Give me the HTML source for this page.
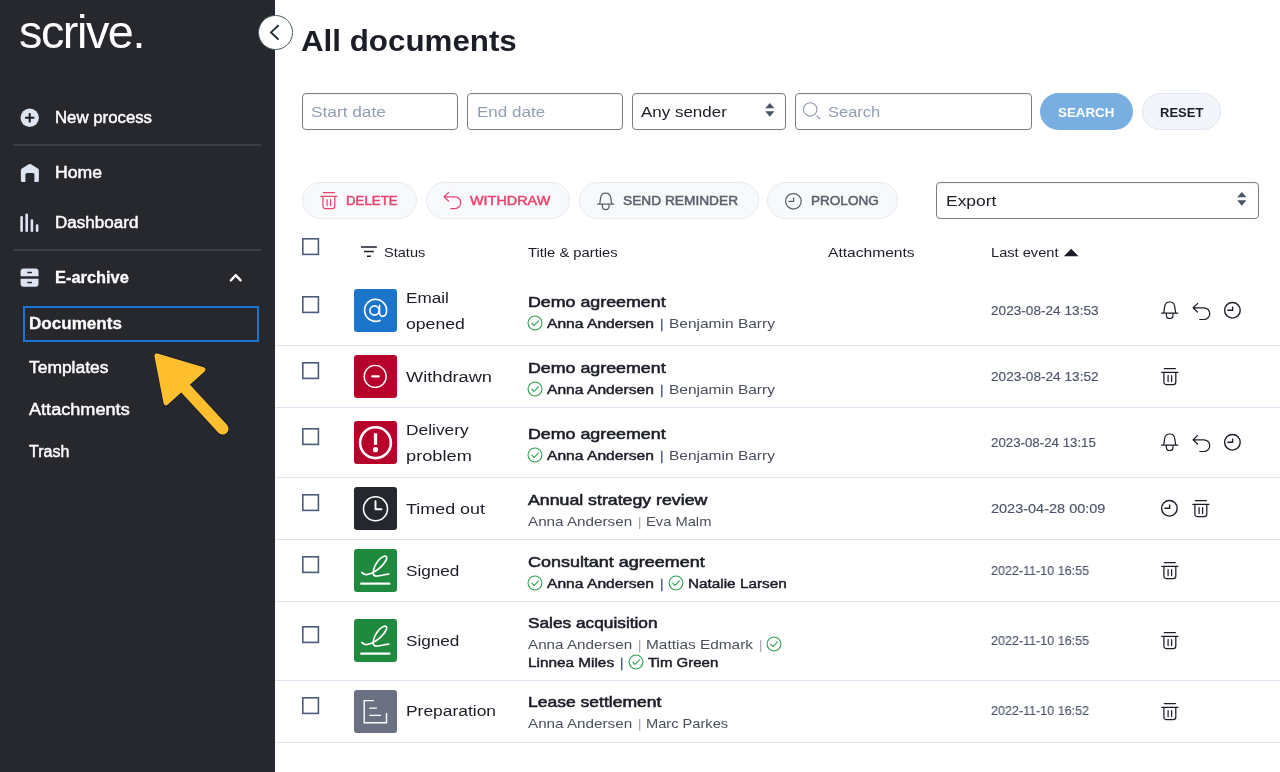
<!DOCTYPE html>
<html lang="en">
<head>
<meta charset="utf-8">
<title>All documents - Scrive</title>
<style>
html,body{margin:0;padding:0;}
body{width:1280px;height:772px;overflow:hidden;background:#fff;font-family:"Liberation Sans",sans-serif;}
#app{position:relative;width:1280px;height:772px;overflow:hidden;background:#fff;}
.t{position:absolute;white-space:nowrap;transform-origin:0 50%;display:block;will-change:transform;}
.abs{position:absolute;display:block;}
.grp{display:block;position:static;margin:0;padding:0;}
#side{position:absolute;left:0;top:0;width:275px;height:772px;background:#27282e;}
.hr{position:absolute;left:13px;width:248px;height:2px;background:#3b3d48;}
.inp{position:absolute;box-sizing:border-box;border:1px solid #787e87;border-radius:4px;background:#fff;box-shadow:inset 0 1px 2px rgba(0,0,0,.06);}
.pill{position:absolute;box-sizing:border-box;border:1px solid #e6ebf2;border-radius:19px;background:#f7f9fb;}
.rb{position:absolute;left:275px;width:1005px;height:1px;background:#dde5f0;}
.ico{position:absolute;left:354px;width:43px;height:43px;border-radius:3px;}
svg{position:absolute;overflow:visible;}

</style>
</head>
<body>
<div id="app">
<aside id="side"></aside>
<nav class="grp">
<span class="t" style="left:18.80px;top:1.66px;font-size:46px;line-height:60px;color:#ffffff;transform:scaleX(1.0152);letter-spacing:-1.4px;">scrive.</span>
<svg style="left:20px;top:108px" width="20" height="20" viewBox="0 0 20 20"><circle cx="9.700" cy="9.800" r="9.2" fill="#dfe5f0"/><path d="M9.700 6V13.600M5.900 9.800H13.500" stroke="#1d1e22" stroke-width="2.1" stroke-linecap="round" fill="none"/></svg>
<span class="t" style="left:55.30px;top:107.06px;font-size:16px;line-height:21px;color:#ffffff;transform:scaleX(1.0489);-webkit-text-stroke:0.45px #ffffff;">New process</span>
<div class="hr" style="top:144px"></div>
<svg style="left:20px;top:163px" width="20" height="20" viewBox="0 0 20 20"><path d="M0.9 7.2Q0.9 6 1.9 5.4L8.8 1.3Q9.9 0.7 11 1.3L17.9 5.4Q18.9 6 18.9 7.2V17.4Q18.9 18.9 17.4 18.9H14.4V11.4Q14.4 9.9 12.9 9.9H6.9Q5.4 9.9 5.4 11.4V18.9H2.4Q0.9 18.9 0.9 17.4Z" fill="#dde3f0"/></svg>
<span class="t" style="left:55.30px;top:161.76px;font-size:16px;line-height:21px;color:#ffffff;transform:scaleX(1.1012);-webkit-text-stroke:0.45px #ffffff;">Home</span>
<svg style="left:20px;top:212px" width="20" height="20" viewBox="0 0 20 20"><g fill="#dde3f0"><rect x="0.3" y="3.9" width="2.6" height="16" rx="1.2"/><rect x="5.4" y="1.4" width="2.6" height="18.5" rx="1.2"/><rect x="10.6" y="7.3" width="2.6" height="12.6" rx="1.2"/><rect x="15.8" y="12.3" width="2.6" height="7.6" rx="1.2"/></g></svg>
<span class="t" style="left:55.30px;top:211.86px;font-size:16px;line-height:21px;color:#ffffff;transform:scaleX(1.0668);-webkit-text-stroke:0.45px #ffffff;">Dashboard</span>
<div class="hr" style="top:249px"></div>
<svg style="left:20px;top:268px" width="20" height="20" viewBox="0 0 20 20"><g fill="#dde3f0"><path d="M0.600 8.200V3.600Q0.600 0.600 3.600 0.600H15.500Q18.500 0.600 18.500 3.600V8.200Z"/><path d="M0.600 10.700V15.800Q0.600 18.800 3.600 18.800H15.500Q18.500 18.800 18.500 15.800V10.700Z"/></g><g fill="#1d1e22"><rect x="7.300" y="3.800" width="4.600" height="1.500" rx="0.300"/><rect x="7.300" y="13.800" width="4.600" height="1.500" rx="0.300"/></g></svg>
<span class="t" style="left:55.40px;top:267.26px;font-size:16px;line-height:21px;color:#ffffff;font-weight:700;transform:scaleX(1.0244);-webkit-text-stroke:0.3px #ffffff;">E-archive</span>
<svg style="left:228px;top:272px" width="16" height="12" viewBox="0 0 16 12"><path d="M2.8 8.4L7.7 3.1L12.600 8.4" stroke="#fff" stroke-width="2.3" fill="none" stroke-linecap="round" stroke-linejoin="round"/></svg>
<div class="abs" style="left:23px;top:305.800px;width:236.300px;height:36.200px;box-sizing:border-box;border:2.200px solid #1a76d2"></div>
<span class="t" style="left:29.30px;top:313.06px;font-size:16px;line-height:21px;color:#ffffff;font-weight:700;transform:scaleX(1.0663);-webkit-text-stroke:0.3px #ffffff;">Documents</span>
<span class="t" style="left:29.00px;top:356.66px;font-size:16px;line-height:21px;color:#ffffff;transform:scaleX(1.0888);-webkit-text-stroke:0.45px #ffffff;">Templates</span>
<span class="t" style="left:28.60px;top:398.66px;font-size:16px;line-height:21px;color:#ffffff;transform:scaleX(1.1324);-webkit-text-stroke:0.45px #ffffff;">Attachments</span>
<span class="t" style="left:29.00px;top:441.46px;font-size:16px;line-height:21px;color:#ffffff;-webkit-text-stroke:0.45px #ffffff;">Trash</span>
<svg style="left:0;top:0" width="275" height="772" viewBox="0 0 275 772"><g stroke-linejoin="round" stroke-linecap="round"><path d="M186 389L222.7 428.8" stroke="#151a2b" stroke-width="13.2" fill="none"/><path d="M156.8 355.8L203 369.6L166 403Z" fill="#151a2b" stroke="#151a2b" stroke-width="6.4"/><path d="M186 389L222.7 428.8" stroke="#fdbf2d" stroke-width="11.6" fill="none"/><path d="M156.8 355.8L203 369.6L166 403Z" fill="#fdbf2d" stroke="#fdbf2d" stroke-width="4.8"/></g></svg>
</nav>
<div class="abs" style="left:258.2px;top:14.9px;width:34.8px;height:34.8px;box-sizing:border-box;border:1px solid #4a5a5c;border-radius:50%;background:#fff"></div>
<svg style="left:258px;top:15px" width="35" height="35" viewBox="0 0 35 35"><path d="M20.600 10.200L13 17.400L20.600 24.600" stroke="#1f2d33" stroke-width="1.900" fill="none" stroke-linecap="butt" stroke-linejoin="miter"/></svg>
<main class="grp">
<header class="grp">
<span class="t" style="left:300.60px;top:20.90px;font-size:30px;line-height:39px;color:#1b1d27;font-weight:700;transform:scaleX(1.0440);">All documents</span>
</header>
<section class="grp">
<div class="inp" style="left:301.5px;top:93px;width:156.5px;height:37px"></div>
<span class="t" style="left:311.20px;top:101.80px;font-size:15px;line-height:20px;color:#939eb2;transform:scaleX(1.1500);">Start date</span>
<div class="inp" style="left:466.5px;top:93px;width:156.5px;height:37px"></div>
<span class="t" style="left:476.60px;top:101.80px;font-size:15px;line-height:20px;color:#939eb2;transform:scaleX(1.1357);">End date</span>
<div class="inp" style="left:631.5px;top:93px;width:154.5px;height:37px"></div>
<span class="t" style="left:641.20px;top:101.70px;font-size:15px;line-height:20px;color:#1b1d27;transform:scaleX(1.1307);">Any sender</span>
<svg style="left:764px;top:102px" width="12" height="16" viewBox="0 0 12 16"><path d="M1.2 6.3L5.8 1L10.4 6.3ZM1.2 9.3L5.8 14.7L10.4 9.3Z" fill="#4a5568"/></svg>
<div class="inp" style="left:795px;top:93px;width:236.5px;height:37px"></div>
<svg style="left:801px;top:100px" width="22" height="22" viewBox="0 0 22 22"><circle cx="9.200" cy="9.400" r="6.700" stroke="#8c97ab" stroke-width="1.1" fill="none"/><path d="M16 16.100L18.800 18.700" stroke="#8c97ab" stroke-width="1.2" stroke-linecap="round"/></svg>
<span class="t" style="left:828.00px;top:101.80px;font-size:15px;line-height:20px;color:#939eb2;transform:scaleX(1.0983);">Search</span>
<div class="abs" style="left:1040px;top:93.3px;width:93px;height:37px;border-radius:19px;background:#78aee0"></div>
<span class="t" style="left:1058.30px;top:103.80px;font-size:13px;line-height:17px;color:#ffffff;font-weight:700;transform:scaleX(1.0255);">SEARCH</span>
<div class="pill" style="left:1141.5px;top:93.3px;width:79.5px;height:37px;background:#f2f5f9;border-color:#dfe5ee"></div>
<span class="t" style="left:1159.80px;top:103.80px;font-size:13px;line-height:17px;color:#1b1d27;font-weight:700;transform:scaleX(0.9920);">RESET</span>
</section>
<section class="grp">
<div class="pill" style="left:301.5px;top:182.3px;width:115.5px;height:37px"></div>
<svg style="left:320px;top:191.3px" width="18" height="19" viewBox="0 0 18 19"><g stroke="#e8446f" stroke-width="1.25" fill="none" stroke-linecap="round"><path d="M3.3 1.6H14.4M0.7 5.3H17M2.9 5.6V15a2.6 2.6 0 0 0 2.6 2.6H12.2a2.6 2.6 0 0 0 2.6-2.6V5.6M7.1 8.6V14.5M10.6 8.6V14.5"/></g></svg>
<span class="t" style="left:346.20px;top:192.30px;font-size:13px;line-height:17px;color:#e8446f;transform:scaleX(1.0200);-webkit-text-stroke:0.5px #e8446f;">DELETE</span>
<div class="pill" style="left:425.5px;top:182.3px;width:144.5px;height:37px"></div>
<svg style="left:443px;top:191.3px" width="20" height="19" viewBox="0 0 20 19"><path d="M5.7 1.4L1.1 5.8L5.5 10M1.1 5.8H11.9A5.85 5.85 0 0 1 11.9 17.5H7.8" stroke="#e8446f" stroke-width="1.25" fill="none" stroke-linecap="round" stroke-linejoin="round"/></svg>
<span class="t" style="left:470.20px;top:192.30px;font-size:13px;line-height:17px;color:#e8446f;transform:scaleX(1.1076);-webkit-text-stroke:0.5px #e8446f;">WITHDRAW</span>
<div class="pill" style="left:578.5px;top:182.3px;width:180px;height:37px"></div>
<svg style="left:596.5px;top:191.8px" width="18" height="19" viewBox="0 0 18 19"><path d="M0.6 12.2H16.8M2.7 12.2L3.6 6.1C3.8 3 5.8 1 8.7 1S13.600 3 13.8 6.1L14.7 12.2M5.4 12.4V14.2a3.3 3.3 0 0 0 6.6 0V12.4" stroke="#5b606b" stroke-width="1.25" fill="none" stroke-linecap="round" stroke-linejoin="round"/></svg>
<span class="t" style="left:623.00px;top:192.30px;font-size:13px;line-height:17px;color:#5b606b;transform:scaleX(1.0550);-webkit-text-stroke:0.5px #5b606b;">SEND REMINDER</span>
<div class="pill" style="left:766.5px;top:182.3px;width:131.5px;height:37px"></div>
<svg style="left:783.5px;top:191.8px" width="19" height="19" viewBox="0 0 19 19"><circle cx="9.4" cy="9.3" r="7.8" stroke="#5b606b" stroke-width="1.25" fill="none"/><path d="M9.6 5.4V9.3H4.4" stroke="#5b606b" stroke-width="1.25" fill="none"/></svg>
<span class="t" style="left:811.00px;top:192.30px;font-size:13px;line-height:17px;color:#5b606b;transform:scaleX(1.0425);-webkit-text-stroke:0.5px #5b606b;">PROLONG</span>
<div class="inp" style="left:935.5px;top:182px;width:323px;height:37px"></div>
<span class="t" style="left:945.60px;top:191.00px;font-size:15px;line-height:20px;color:#1b1d27;transform:scaleX(1.1625);">Export</span>
<svg style="left:1236px;top:191px" width="12" height="16" viewBox="0 0 12 16"><path d="M1.2 6.3L5.8 1L10.4 6.3ZM1.2 9.3L5.8 14.7L10.4 9.3Z" fill="#4a5568"/></svg>
</section>
<section class="grp">
<svg style="left:301.8px;top:237.80px" width="18" height="18" viewBox="0 0 18 18"><rect x="0.800" y="0.800" width="15.600" height="15.600" fill="#fff" stroke="#4a5b7d" stroke-width="1.600"/></svg>
<svg style="left:360px;top:245px" width="18" height="14" viewBox="0 0 18 14"><path d="M1 2H16.8M4 6.6H13.8M7 11.3H10.8" stroke="#1b1d27" stroke-width="1.5" fill="none"/></svg>
<span class="t" style="left:384.20px;top:243.50px;font-size:13px;line-height:17px;color:#1b1d27;transform:scaleX(1.1206);">Status</span>
<span class="t" style="left:527.80px;top:243.50px;font-size:13px;line-height:17px;color:#1b1d27;transform:scaleX(1.1343);">Title &amp; parties</span>
<span class="t" style="left:828.00px;top:243.50px;font-size:13px;line-height:17px;color:#1b1d27;transform:scaleX(1.1985);">Attachments</span>
<span class="t" style="left:991.30px;top:243.50px;font-size:13px;line-height:17px;color:#1b1d27;transform:scaleX(1.1253);">Last event</span>
<svg style="left:1063px;top:247px" width="17" height="11" viewBox="0 0 17 11"><path d="M0.9 9.2L8.2 1.7L15.500 9.2Z" fill="#1b1d27"/></svg>
</section>
<article class="grp">
<div class="rb" style="top:345px"></div>
<svg style="left:301.8px;top:296.00px" width="18" height="18" viewBox="0 0 18 18"><rect x="0.800" y="0.800" width="15.600" height="15.600" fill="#fff" stroke="#4a5b7d" stroke-width="1.600"/></svg>
<div class="ico" style="top:289.0px;background:#1b75cb"></div>
<svg style="left:354px;top:289.0px" width="43" height="43" viewBox="0 0 43 43"><g stroke="#fff" stroke-width="1.6" fill="none" stroke-linecap="round" stroke-linejoin="round"><circle cx="20.500" cy="21.500" r="4.600"/><path d="M25.500 16.300V24.300C25.500 28.600 32.600 28.900 32.600 21.400A11 11 0 1 0 26 31.400"/></g></svg>
<span class="t" style="left:405.80px;top:287.83px;font-size:15.5px;line-height:20px;color:#1b1d27;transform:scaleX(1.1043);">Email</span>
<span class="t" style="left:405.80px;top:313.83px;font-size:15.5px;line-height:20px;color:#1b1d27;transform:scaleX(1.1367);">opened</span>
<span class="t" style="left:528.00px;top:292.58px;font-size:14.5px;line-height:19px;color:#1b1d27;transform:scaleX(1.2285);-webkit-text-stroke:0.55px #1b1d27;">Demo agreement</span>
<svg style="left:527.2px;top:314.7px" width="16" height="16" viewBox="0 0 16 16"><circle cx="8" cy="8" r="6.950" stroke="#2f9e50" stroke-width="1.1" fill="none"/><path d="M4.800 8.200L7.100 10.500L11.400 5.800" stroke="#2f9e50" stroke-width="1.1" fill="none" stroke-linecap="round" stroke-linejoin="round"/></svg>
<span class="t" style="left:547.10px;top:314.90px;font-size:13px;line-height:17px;color:#1b1d27;transform:scaleX(1.2019);-webkit-text-stroke:0.45px #1b1d27;">Anna Andersen</span>
<span class="t" style="left:660.00px;top:314.90px;font-size:13px;line-height:17px;color:#46527a;-webkit-text-stroke:0.3px #46527a;">|</span>
<span class="t" style="left:669.20px;top:314.90px;font-size:13px;line-height:17px;color:#4a4f5c;transform:scaleX(1.1916);">Benjamin Barry</span>
<span class="t" style="left:991.00px;top:301.60px;font-size:13px;line-height:17px;color:#4b5468;transform:scaleX(1.0482);-webkit-text-stroke:0.15px #4b5468;">2023-08-24 13:53</span>
<svg style="left:1161px;top:301.4px" width="18" height="19" viewBox="0 0 18 19"><path d="M0.6 12.2H16.8M2.7 12.2L3.6 6.1C3.8 3 5.800 1 8.7 1S13.600 3 13.8 6.1L14.7 12.2M5.4 12.4V14.2a3.3 3.3 0 0 0 6.6 0V12.4" stroke="#1b1d27" stroke-width="1.2" fill="none" stroke-linecap="round" stroke-linejoin="round"/></svg>
<svg style="left:1191.8px;top:301.9px" width="20" height="19" viewBox="0 0 20 19"><path d="M5.7 1.4L1.1 5.8L5.5 10M1.1 5.8H11.9A5.85 5.85 0 0 1 11.9 17.5H7.8" stroke="#1b1d27" stroke-width="1.2" fill="none" stroke-linecap="round" stroke-linejoin="round"/></svg>
<svg style="left:1223px;top:301.2px" width="19" height="19" viewBox="0 0 19 19"><circle cx="9.4" cy="9.3" r="7.8" stroke="#1b1d27" stroke-width="1.4" fill="none"/><path d="M9.6 5.400V9.3H4.4" stroke="#1b1d27" stroke-width="1.4" fill="none"/></svg>
</article>
<article class="grp">
<div class="rb" style="top:407px"></div>
<svg style="left:301.8px;top:362.00px" width="18" height="18" viewBox="0 0 18 18"><rect x="0.800" y="0.800" width="15.600" height="15.600" fill="#fff" stroke="#4a5b7d" stroke-width="1.600"/></svg>
<div class="ico" style="top:355.0px;background:#b7002a"></div>
<svg style="left:354px;top:355.0px" width="43" height="43" viewBox="0 0 43 43"><g stroke="#fff" stroke-width="1.4" fill="none" stroke-linecap="round" stroke-linejoin="round"><circle cx="21.2" cy="21.4" r="11"/><path d="M18.200 21.400H24.800" stroke-width="2.1"/></g></svg>
<span class="t" style="left:405.80px;top:366.73px;font-size:15.5px;line-height:20px;color:#1b1d27;transform:scaleX(1.1746);">Withdrawn</span>
<span class="t" style="left:528.00px;top:358.58px;font-size:14.5px;line-height:19px;color:#1b1d27;transform:scaleX(1.2285);-webkit-text-stroke:0.55px #1b1d27;">Demo agreement</span>
<svg style="left:527.2px;top:380.7px" width="16" height="16" viewBox="0 0 16 16"><circle cx="8" cy="8" r="6.950" stroke="#2f9e50" stroke-width="1.1" fill="none"/><path d="M4.800 8.200L7.100 10.500L11.400 5.800" stroke="#2f9e50" stroke-width="1.1" fill="none" stroke-linecap="round" stroke-linejoin="round"/></svg>
<span class="t" style="left:547.10px;top:380.90px;font-size:13px;line-height:17px;color:#1b1d27;transform:scaleX(1.2019);-webkit-text-stroke:0.45px #1b1d27;">Anna Andersen</span>
<span class="t" style="left:660.00px;top:380.90px;font-size:13px;line-height:17px;color:#46527a;-webkit-text-stroke:0.3px #46527a;">|</span>
<span class="t" style="left:669.20px;top:380.90px;font-size:13px;line-height:17px;color:#4a4f5c;transform:scaleX(1.1916);">Benjamin Barry</span>
<span class="t" style="left:991.00px;top:367.60px;font-size:13px;line-height:17px;color:#4b5468;transform:scaleX(1.0482);-webkit-text-stroke:0.15px #4b5468;">2023-08-24 13:52</span>
<svg style="left:1161px;top:367.1px" width="18" height="19" viewBox="0 0 18 19"><g stroke="#1b1d27" stroke-width="1.25" fill="none" stroke-linecap="round"><path d="M3.3 1.6H14.4M0.7 5.3H17M2.9 5.6V15a2.6 2.6 0 0 0 2.6 2.6H12.2a2.6 2.6 0 0 0 2.6-2.6V5.6M7.100 8.6V14.5M10.6 8.6V14.5"/></g></svg>
</article>
<article class="grp">
<div class="rb" style="top:477px"></div>
<svg style="left:301.8px;top:428.00px" width="18" height="18" viewBox="0 0 18 18"><rect x="0.800" y="0.800" width="15.600" height="15.600" fill="#fff" stroke="#4a5b7d" stroke-width="1.600"/></svg>
<div class="ico" style="top:421.0px;background:#b7002a"></div>
<svg style="left:354px;top:421.0px" width="43" height="43" viewBox="0 0 43 43"><g stroke="#fff" stroke-width="2.5" fill="none" stroke-linecap="round" stroke-linejoin="round"><circle cx="21.500" cy="21.700" r="15.400" stroke-width="2.600"/><path d="M21.500 12.300V23.800" stroke-width="3.3" stroke-linecap="butt"/><circle cx="21.500" cy="28.700" r="2.600" fill="#fff" stroke="none"/></g></svg>
<span class="t" style="left:405.80px;top:419.83px;font-size:15.5px;line-height:20px;color:#1b1d27;transform:scaleX(1.1200);">Delivery</span>
<span class="t" style="left:405.80px;top:445.83px;font-size:15.5px;line-height:20px;color:#1b1d27;transform:scaleX(1.1750);">problem</span>
<span class="t" style="left:528.00px;top:424.58px;font-size:14.5px;line-height:19px;color:#1b1d27;transform:scaleX(1.2285);-webkit-text-stroke:0.55px #1b1d27;">Demo agreement</span>
<svg style="left:527.2px;top:446.7px" width="16" height="16" viewBox="0 0 16 16"><circle cx="8" cy="8" r="6.950" stroke="#2f9e50" stroke-width="1.1" fill="none"/><path d="M4.800 8.200L7.100 10.500L11.400 5.800" stroke="#2f9e50" stroke-width="1.1" fill="none" stroke-linecap="round" stroke-linejoin="round"/></svg>
<span class="t" style="left:547.10px;top:446.90px;font-size:13px;line-height:17px;color:#1b1d27;transform:scaleX(1.2019);-webkit-text-stroke:0.45px #1b1d27;">Anna Andersen</span>
<span class="t" style="left:660.00px;top:446.90px;font-size:13px;line-height:17px;color:#46527a;-webkit-text-stroke:0.3px #46527a;">|</span>
<span class="t" style="left:669.20px;top:446.90px;font-size:13px;line-height:17px;color:#4a4f5c;transform:scaleX(1.1916);">Benjamin Barry</span>
<span class="t" style="left:991.00px;top:433.60px;font-size:13px;line-height:17px;color:#4b5468;transform:scaleX(1.0219);-webkit-text-stroke:0.15px #4b5468;">2023-08-24 13:15</span>
<svg style="left:1161px;top:433.4px" width="18" height="19" viewBox="0 0 18 19"><path d="M0.6 12.2H16.8M2.7 12.2L3.6 6.1C3.8 3 5.800 1 8.7 1S13.600 3 13.8 6.1L14.7 12.2M5.4 12.4V14.2a3.3 3.3 0 0 0 6.6 0V12.4" stroke="#1b1d27" stroke-width="1.2" fill="none" stroke-linecap="round" stroke-linejoin="round"/></svg>
<svg style="left:1191.8px;top:433.9px" width="20" height="19" viewBox="0 0 20 19"><path d="M5.7 1.4L1.1 5.8L5.5 10M1.1 5.8H11.9A5.85 5.85 0 0 1 11.9 17.5H7.8" stroke="#1b1d27" stroke-width="1.2" fill="none" stroke-linecap="round" stroke-linejoin="round"/></svg>
<svg style="left:1223px;top:433.2px" width="19" height="19" viewBox="0 0 19 19"><circle cx="9.4" cy="9.3" r="7.8" stroke="#1b1d27" stroke-width="1.4" fill="none"/><path d="M9.6 5.400V9.3H4.4" stroke="#1b1d27" stroke-width="1.4" fill="none"/></svg>
</article>
<article class="grp">
<div class="rb" style="top:539px"></div>
<svg style="left:301.8px;top:494.00px" width="18" height="18" viewBox="0 0 18 18"><rect x="0.800" y="0.800" width="15.600" height="15.600" fill="#fff" stroke="#4a5b7d" stroke-width="1.600"/></svg>
<div class="ico" style="top:487.0px;background:#25272e"></div>
<svg style="left:354px;top:487.0px" width="43" height="43" viewBox="0 0 43 43"><g stroke="#fff" stroke-width="1.6" fill="none" stroke-linecap="round" stroke-linejoin="round"><circle cx="21.500" cy="21.800" r="12"/><path d="M21.500 14.300V22.300H27.400" stroke-width="1.9"/></g></svg>
<span class="t" style="left:405.80px;top:498.73px;font-size:15.5px;line-height:20px;color:#1b1d27;transform:scaleX(1.1559);">Timed out</span>
<span class="t" style="left:528.00px;top:490.58px;font-size:14.5px;line-height:19px;color:#1b1d27;transform:scaleX(1.2225);-webkit-text-stroke:0.55px #1b1d27;">Annual strategy review</span>
<span class="t" style="left:528.10px;top:512.90px;font-size:13px;line-height:17px;color:#4a4f5c;transform:scaleX(1.1708);">Anna Andersen</span>
<span class="t" style="left:637.70px;top:512.90px;font-size:13px;line-height:17px;color:#9aa1b4;">|</span>
<span class="t" style="left:646.20px;top:512.90px;font-size:13px;line-height:17px;color:#4a4f5c;transform:scaleX(1.1316);">Eva Malm</span>
<span class="t" style="left:991.00px;top:499.60px;font-size:13px;line-height:17px;color:#4b5468;transform:scaleX(1.1145);-webkit-text-stroke:0.15px #4b5468;">2023-04-28 00:09</span>
<svg style="left:1159.8px;top:499.2px" width="19" height="19" viewBox="0 0 19 19"><circle cx="9.4" cy="9.3" r="7.8" stroke="#1b1d27" stroke-width="1.4" fill="none"/><path d="M9.6 5.400V9.3H4.4" stroke="#1b1d27" stroke-width="1.4" fill="none"/></svg>
<svg style="left:1192.4px;top:499.1px" width="18" height="19" viewBox="0 0 18 19"><g stroke="#1b1d27" stroke-width="1.25" fill="none" stroke-linecap="round"><path d="M3.3 1.6H14.4M0.7 5.3H17M2.9 5.6V15a2.6 2.6 0 0 0 2.6 2.6H12.2a2.6 2.6 0 0 0 2.6-2.6V5.6M7.100 8.6V14.5M10.6 8.6V14.5"/></g></svg>
</article>
<article class="grp">
<div class="rb" style="top:601px"></div>
<svg style="left:301.8px;top:556.00px" width="18" height="18" viewBox="0 0 18 18"><rect x="0.800" y="0.800" width="15.600" height="15.600" fill="#fff" stroke="#4a5b7d" stroke-width="1.600"/></svg>
<div class="ico" style="top:549.0px;background:#1f8a3d"></div>
<svg style="left:354px;top:549.0px" width="43" height="43" viewBox="0 0 43 43"><g stroke="#fff" stroke-width="1.7" fill="none" stroke-linecap="round" stroke-linejoin="round"><path d="M6.300 34.600H36.300" stroke-width="2.200" stroke-linecap="butt"/><path d="M7.800 23.500C9.500 25 11 25.800 12.500 25.600C15 25.400 20 23.500 24.300 20.200C28 17 32 12.500 32.700 9.200C33 7.500 31.500 6.800 30.200 7.200C27 8.200 23.500 12 21.400 16C20 19 18.800 22.500 19.300 25C19.700 26.800 21 27.200 23 27C27 26.500 31 25.600 34.700 25.100" stroke-width="1.700"/></g></svg>
<span class="t" style="left:405.80px;top:560.73px;font-size:15.5px;line-height:20px;color:#1b1d27;transform:scaleX(1.1064);">Signed</span>
<span class="t" style="left:528.00px;top:552.58px;font-size:14.5px;line-height:19px;color:#1b1d27;transform:scaleX(1.2379);-webkit-text-stroke:0.55px #1b1d27;">Consultant agreement</span>
<svg style="left:527.2px;top:574.7px" width="16" height="16" viewBox="0 0 16 16"><circle cx="8" cy="8" r="6.950" stroke="#2f9e50" stroke-width="1.1" fill="none"/><path d="M4.800 8.200L7.100 10.500L11.400 5.800" stroke="#2f9e50" stroke-width="1.1" fill="none" stroke-linecap="round" stroke-linejoin="round"/></svg>
<span class="t" style="left:547.10px;top:574.90px;font-size:13px;line-height:17px;color:#1b1d27;transform:scaleX(1.2019);-webkit-text-stroke:0.45px #1b1d27;">Anna Andersen</span>
<span class="t" style="left:660.00px;top:574.90px;font-size:13px;line-height:17px;color:#46527a;-webkit-text-stroke:0.3px #46527a;">|</span>
<svg style="left:667.7px;top:574.7px" width="16" height="16" viewBox="0 0 16 16"><circle cx="8" cy="8" r="6.950" stroke="#2f9e50" stroke-width="1.1" fill="none"/><path d="M4.800 8.200L7.100 10.500L11.400 5.800" stroke="#2f9e50" stroke-width="1.1" fill="none" stroke-linecap="round" stroke-linejoin="round"/></svg>
<span class="t" style="left:688.30px;top:574.90px;font-size:13px;line-height:17px;color:#1b1d27;transform:scaleX(1.1770);-webkit-text-stroke:0.45px #1b1d27;">Natalie Larsen</span>
<span class="t" style="left:991.00px;top:561.60px;font-size:13px;line-height:17px;color:#4b5468;transform:scaleX(0.9638);-webkit-text-stroke:0.15px #4b5468;">2022-11-10 16:55</span>
<svg style="left:1161px;top:561.1px" width="18" height="19" viewBox="0 0 18 19"><g stroke="#1b1d27" stroke-width="1.25" fill="none" stroke-linecap="round"><path d="M3.3 1.6H14.4M0.7 5.3H17M2.9 5.6V15a2.6 2.6 0 0 0 2.6 2.6H12.2a2.6 2.6 0 0 0 2.6-2.6V5.6M7.100 8.6V14.5M10.6 8.6V14.5"/></g></svg>
</article>
<article class="grp">
<div class="rb" style="top:680px"></div>
<svg style="left:301.8px;top:626.00px" width="18" height="18" viewBox="0 0 18 18"><rect x="0.800" y="0.800" width="15.600" height="15.600" fill="#fff" stroke="#4a5b7d" stroke-width="1.600"/></svg>
<div class="ico" style="top:619.0px;background:#1f8a3d"></div>
<svg style="left:354px;top:619.0px" width="43" height="43" viewBox="0 0 43 43"><g stroke="#fff" stroke-width="1.7" fill="none" stroke-linecap="round" stroke-linejoin="round"><path d="M6.300 34.600H36.300" stroke-width="2.200" stroke-linecap="butt"/><path d="M7.800 23.500C9.500 25 11 25.800 12.500 25.600C15 25.400 20 23.500 24.300 20.200C28 17 32 12.500 32.700 9.200C33 7.500 31.500 6.800 30.200 7.200C27 8.200 23.500 12 21.400 16C20 19 18.800 22.500 19.300 25C19.700 26.800 21 27.200 23 27C27 26.500 31 25.600 34.700 25.100" stroke-width="1.700"/></g></svg>
<span class="t" style="left:405.80px;top:630.73px;font-size:15.5px;line-height:20px;color:#1b1d27;transform:scaleX(1.1064);">Signed</span>
<span class="t" style="left:528.00px;top:613.88px;font-size:14.5px;line-height:19px;color:#1b1d27;transform:scaleX(1.1905);-webkit-text-stroke:0.55px #1b1d27;">Sales acquisition</span>
<span class="t" style="left:528.10px;top:636.20px;font-size:13px;line-height:17px;color:#4a4f5c;transform:scaleX(1.1708);">Anna Andersen</span>
<span class="t" style="left:637.70px;top:636.20px;font-size:13px;line-height:17px;color:#9aa1b4;">|</span>
<span class="t" style="left:646.20px;top:636.20px;font-size:13px;line-height:17px;color:#4a4f5c;transform:scaleX(1.1849);">Mattias Edmark</span>
<span class="t" style="left:758.50px;top:636.20px;font-size:13px;line-height:17px;color:#9aa1b4;">|</span>
<svg style="left:766.2px;top:636.0px" width="16" height="16" viewBox="0 0 16 16"><circle cx="8" cy="8" r="6.950" stroke="#2f9e50" stroke-width="1.1" fill="none"/><path d="M4.800 8.200L7.100 10.500L11.400 5.800" stroke="#2f9e50" stroke-width="1.1" fill="none" stroke-linecap="round" stroke-linejoin="round"/></svg>
<span class="t" style="left:528.10px;top:653.80px;font-size:13px;line-height:17px;color:#1b1d27;transform:scaleX(1.1792);-webkit-text-stroke:0.45px #1b1d27;">Linnea Miles</span>
<span class="t" style="left:619.50px;top:653.80px;font-size:13px;line-height:17px;color:#46527a;-webkit-text-stroke:0.3px #46527a;">|</span>
<svg style="left:627.7px;top:653.6px" width="16" height="16" viewBox="0 0 16 16"><circle cx="8" cy="8" r="6.950" stroke="#2f9e50" stroke-width="1.1" fill="none"/><path d="M4.800 8.200L7.100 10.500L11.400 5.800" stroke="#2f9e50" stroke-width="1.1" fill="none" stroke-linecap="round" stroke-linejoin="round"/></svg>
<span class="t" style="left:648.40px;top:653.80px;font-size:13px;line-height:17px;color:#1b1d27;transform:scaleX(1.1536);-webkit-text-stroke:0.45px #1b1d27;">Tim Green</span>
<span class="t" style="left:991.00px;top:631.60px;font-size:13px;line-height:17px;color:#4b5468;transform:scaleX(0.9638);-webkit-text-stroke:0.15px #4b5468;">2022-11-10 16:55</span>
<svg style="left:1161px;top:631.1px" width="18" height="19" viewBox="0 0 18 19"><g stroke="#1b1d27" stroke-width="1.25" fill="none" stroke-linecap="round"><path d="M3.3 1.6H14.4M0.7 5.3H17M2.9 5.6V15a2.6 2.6 0 0 0 2.6 2.6H12.2a2.6 2.6 0 0 0 2.6-2.6V5.6M7.100 8.6V14.5M10.6 8.6V14.5"/></g></svg>
</article>
<article class="grp">
<div class="rb" style="top:742px"></div>
<svg style="left:301.8px;top:696.50px" width="18" height="18" viewBox="0 0 18 18"><rect x="0.800" y="0.800" width="15.600" height="15.600" fill="#fff" stroke="#4a5b7d" stroke-width="1.600"/></svg>
<div class="ico" style="top:689.5px;background:#6b7183"></div>
<svg style="left:354px;top:689.5px" width="43" height="43" viewBox="0 0 43 43"><g stroke="#fff" stroke-width="1.4" fill="none" stroke-linecap="round" stroke-linejoin="round"><path d="M19.800 10.600H10.200V32.700H32.500V23" stroke-linecap="butt" stroke-linejoin="miter"/><path d="M15.300 18.100H23M15.300 25.400H27" stroke-linecap="butt"/></g></svg>
<span class="t" style="left:405.80px;top:701.23px;font-size:15.5px;line-height:20px;color:#1b1d27;transform:scaleX(1.1231);">Preparation</span>
<span class="t" style="left:528.00px;top:693.08px;font-size:14.5px;line-height:19px;color:#1b1d27;transform:scaleX(1.2083);-webkit-text-stroke:0.55px #1b1d27;">Lease settlement</span>
<span class="t" style="left:528.10px;top:715.40px;font-size:13px;line-height:17px;color:#4a4f5c;transform:scaleX(1.1708);">Anna Andersen</span>
<span class="t" style="left:637.70px;top:715.40px;font-size:13px;line-height:17px;color:#9aa1b4;">|</span>
<span class="t" style="left:646.20px;top:715.40px;font-size:13px;line-height:17px;color:#4a4f5c;transform:scaleX(1.1252);">Marc Parkes</span>
<span class="t" style="left:991.00px;top:702.10px;font-size:13px;line-height:17px;color:#4b5468;transform:scaleX(0.9638);-webkit-text-stroke:0.15px #4b5468;">2022-11-10 16:52</span>
<svg style="left:1161px;top:701.6px" width="18" height="19" viewBox="0 0 18 19"><g stroke="#1b1d27" stroke-width="1.25" fill="none" stroke-linecap="round"><path d="M3.3 1.6H14.4M0.7 5.3H17M2.9 5.6V15a2.6 2.6 0 0 0 2.6 2.6H12.2a2.6 2.6 0 0 0 2.6-2.6V5.6M7.100 8.6V14.5M10.6 8.6V14.5"/></g></svg>
</article>
</main>
</div>
</body>
</html>
